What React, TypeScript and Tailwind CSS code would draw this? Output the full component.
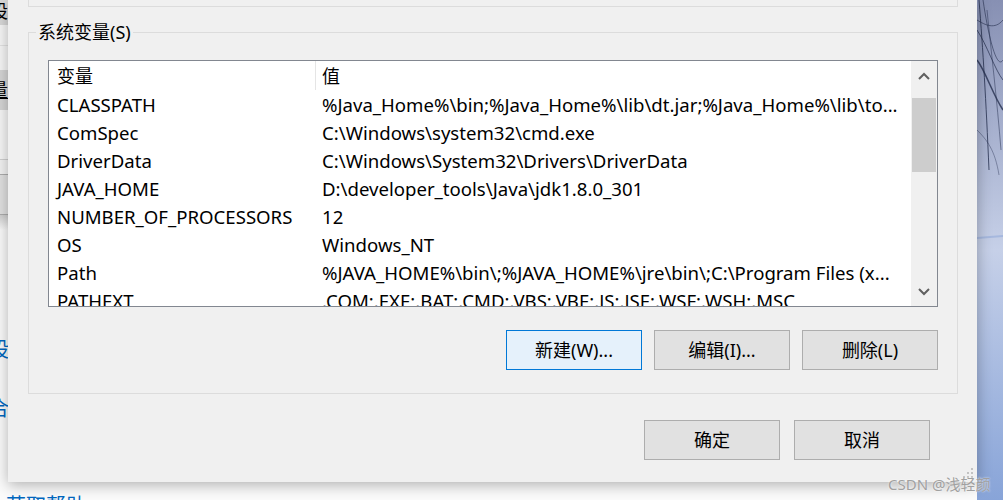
import React from 'react';

const rows: [string, string][] = [
  ['CLASSPATH', '%Java_Home%\\bin;%Java_Home%\\lib\\dt.jar;%Java_Home%\\lib\\to...'],
  ['ComSpec', 'C:\\Windows\\system32\\cmd.exe'],
  ['DriverData', 'C:\\Windows\\System32\\Drivers\\DriverData'],
  ['JAVA_HOME', 'D:\\developer_tools\\Java\\jdk1.8.0_301'],
  ['NUMBER_OF_PROCESSORS', '12'],
  ['OS', 'Windows_NT'],
  ['Path', '%JAVA_HOME%\\bin\\;%JAVA_HOME%\\jre\\bin\\;C:\\Program Files (x...'],
  ['PATHEXT', '.COM;.EXE;.BAT;.CMD;.VBS;.VBE;.JS;.JSE;.WSF;.WSH;.MSC'],
];

function WinButton({ label, focused = false }: { label: string; focused?: boolean }) {
  return (
    <button
      className={
        focused
          ? 'flex h-[40px] w-[136px] items-center justify-center border border-[#0078d7] bg-[#e5f1fb] text-[18px] text-black'
          : 'flex h-[40px] w-[136px] items-center justify-center border border-[#adadad] bg-[#e1e1e1] text-[18px] text-black'
      }
    >
      {label}
    </button>
  );
}

function Chevron({ up }: { up?: boolean }) {
  return (
    <svg width="12" height="8" viewBox="0 0 12 8" fill="none">
      <path
        d={up ? 'M1 7 L6 2 L11 7' : 'M1 1 L6 6 L11 1'}
        stroke="#606060"
        strokeWidth="2"
      />
    </svg>
  );
}

export default function App() {
  return (
    <div className="relative flex h-[500px] w-[1003px] overflow-hidden bg-white font-['Noto_Sans','Noto_Sans_CJK_SC',sans-serif] text-black">
      {/* window behind the dialog */}
      <div className="flex w-[977px] flex-col bg-[#fbfbfb] *:shrink-0">
        <div className="h-[25px] overflow-hidden bg-[#d9d9d9] text-[18px] leading-[22px]">
          <span className="ml-[-10px]">设</span>
        </div>
        <div className="h-[21px] border-b border-[#e3e3e3] bg-[#f7f7f7]" />
        <div className="h-[24px] bg-[#f7f7f7]" />
        <div className="h-[40px] overflow-hidden bg-[#d6d6d6] text-[18px] leading-[40px]">
          <span className="ml-[-10px] underline">量</span>
        </div>
        <div className="h-[50px] border-b border-[#d0d0d0] bg-[#f7f7f7]" />
        <div className="h-[14px] bg-[#f3f3f3]" />
        <div className="h-[41px] border-y border-[#adadad] bg-[#e1e1e1]" />
        <div className="h-[15px] bg-linear-to-b from-[#cfcfcf] to-[#fbfbfb]" />
        <div className="h-[107px]" />
        <div className="h-[26px] overflow-hidden text-[20px] leading-[26px] text-[#0067c0]">
          <span className="ml-[-11px]">设</span>
        </div>
        <div className="h-[33px]" />
        <div className="h-[26px] overflow-hidden text-[20px] leading-[26px] text-[#0067c0]">
          <span className="ml-[-11px]">合</span>
        </div>
        <div className="h-[71px]" />
        <div className="pl-[6px] text-[20px] leading-[26px] text-[#0067c0]">获取帮助</div>
      </div>

      {/* wallpaper */}
      <div className="relative flex-1 bg-linear-to-b from-[#8790b3] via-[#c6d0e8] to-[#88a4d8]">
        <svg className="absolute inset-0" width="26" height="500" viewBox="0 0 26 500" fill="none">
          <path d="M2 0 C6 50 9 100 12 170" stroke="#26304f" strokeWidth="1" opacity="0.8" />
          <path d="M0 30 C10 45 18 70 26 80" stroke="#26304f" strokeWidth="1" opacity="0.7" />
          <path d="M0 60 C8 70 16 95 26 110" stroke="#26304f" strokeWidth="1.5" opacity="0.8" />
          <path d="M6 0 C12 40 20 70 26 60" stroke="#26304f" strokeWidth="1" opacity="0.6" />
          <path d="M0 20 C8 25 18 30 26 20" stroke="#26304f" strokeWidth="1" opacity="0.6" />
          <path d="M10 10 C14 50 20 100 24 150" stroke="#26304f" strokeWidth="1" opacity="0.5" />
          <path d="M0 130 C10 140 18 150 22 175" stroke="#26304f" strokeWidth="1" opacity="0.4" />
          <path d="M0 238 L26 236" stroke="#9fb3dc" strokeWidth="2" opacity="0.8" />
        </svg>
      </div>

      {/* dialog window */}
      <div className="absolute left-[8px] top-0 flex h-[482px] w-[969px] flex-col bg-[#f0f0f0] pl-[20px] pr-[19px] shadow-[0_3px_14px_rgba(0,0,0,0.3)]">
        <div className="h-[7px] border-x border-b border-[#dcdcdc]" />

        {/* 系统变量 group */}
        <div className="relative mt-[25px] h-[362px] border border-[#dcdcdc] px-[19px] pt-[27px]">
          <span className="absolute left-[7px] top-[-13px] bg-[#f0f0f0] px-[2px] text-[18px] leading-[24px]">
            系统变量(S)
          </span>

          <div className="flex h-[247px] border border-[#828790] bg-white">
            <div className="flex-1 overflow-hidden">
              <div className="flex h-[30px] items-center text-[18px]">
                <div className="w-[266px] pl-[8px]">变量</div>
                <div className="h-[29px] w-px self-start bg-[#e5e5e5]" />
                <div className="pl-[6px]">值</div>
              </div>
              {rows.map(([name, value]) => (
                <div key={name} className="flex h-[28px] items-center whitespace-nowrap text-[18.6px] leading-[28px]">
                  <div className="w-[267px] pl-[8px]">{name}</div>
                  <div className="pl-[6px]">{value}</div>
                </div>
              ))}
            </div>
            <div className="flex w-[26px] flex-col bg-[#f0f0f0]">
              <div className="flex h-[30px] items-center justify-center">
                <Chevron up />
              </div>
              <div className="h-[7px]" />
              <div className="mx-[1px] h-[74px] bg-[#cdcdcd]" />
              <div className="flex-1" />
              <div className="flex h-[28px] items-center justify-center">
                <Chevron />
              </div>
            </div>
          </div>

          <div className="mt-[23px] flex justify-end gap-[12px]">
            <WinButton label="新建(W)..." focused />
            <WinButton label="编辑(I)..." />
            <WinButton label="删除(L)" />
          </div>
        </div>

        <div className="mr-[28px] mt-[26px] flex justify-end gap-[14px]">
          <WinButton label="确定" />
          <WinButton label="取消" />
        </div>

        {/* resize grip */}
        <svg className="absolute bottom-[3px] right-[3px]" width="12" height="12" viewBox="0 0 12 12">
          <rect x="9" y="1" width="2" height="2" fill="#c2c2c2" />
          <rect x="5" y="5" width="2" height="2" fill="#c2c2c2" />
          <rect x="9" y="5" width="2" height="2" fill="#c2c2c2" />
          <rect x="1" y="9" width="2" height="2" fill="#c2c2c2" />
          <rect x="5" y="9" width="2" height="2" fill="#c2c2c2" />
          <rect x="9" y="9" width="2" height="2" fill="#c2c2c2" />
        </svg>
      </div>

      {/* watermark */}
      <div className="absolute left-[888px] top-[474px] whitespace-nowrap text-[15px] leading-[20px] text-[#a0a0a0] [text-shadow:0_0_2px_rgba(255,255,255,0.9)]">
        CSDN @浅轻颜
      </div>
    </div>
  );
}
